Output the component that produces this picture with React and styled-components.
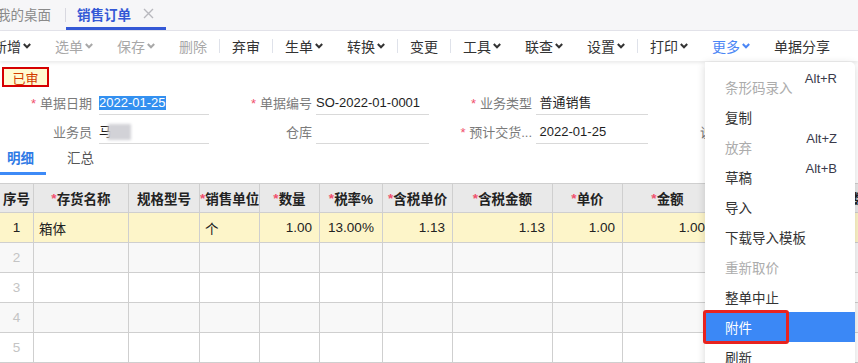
import React from "react";
import styled, { createGlobalStyle } from "styled-components";

const GlobalStyle = createGlobalStyle`
  html, body {
    margin: 0;
    padding: 0;
    background: #fff;
    overflow: hidden;
  }
  body {
    font-family: "Liberation Sans", "Noto Sans CJK SC", sans-serif;
    font-size: 13px;
    color: #222;
  }
`;

const Page = styled.div`
  position: relative;
  width: 858px;
  height: 363px;
  overflow: hidden;
`;

/* ---------- top tabs ---------- */
const TabBar = styled.div`
  display: flex;
  align-items: stretch;
  height: 30px;
  background: #f6f6f8;
  border-bottom: 1px solid #e3e3ea;
`;

const PageTab = styled.div`
  display: flex;
  align-items: center;
  gap: 12px;
  padding: 0 12px 0 ${(p) => (p.$active ? 11 : 12)}px;
  margin-left: ${(p) => p.$offset || 0}px;
  font-size: 13.5px;
  color: ${(p) => (p.$active ? "#3458d6" : "#8a8a8a")};
  font-weight: ${(p) => (p.$active ? 600 : 400)};
  border-bottom: 3px solid ${(p) => (p.$active ? "#3458d6" : "transparent")};
  box-sizing: border-box;
`;

const TabDivider = styled.div`
  width: 1px;
  height: 14px;
  align-self: center;
  background: #d8d8e0;
  margin: 0 0 0 2px;
`;

const CloseIcon = () => (
  <svg width="11" height="11" viewBox="0 0 11 11">
    <path d="M1 1 L10 10 M10 1 L1 10" stroke="#b8b8be" strokeWidth="1.4" />
  </svg>
);

/* ---------- toolbar ---------- */
const Toolbar = styled.div`
  display: flex;
  align-items: center;
  height: 30px;
  background: #fff;
  box-shadow: 0 2px 3px rgba(0, 0, 0, 0.08);
  position: relative;
  z-index: 1;
`;

const ToolRow = styled.div`
  display: flex;
  align-items: center;
  margin-left: -19px;
`;

const ToolItem = styled.div`
  display: flex;
  align-items: center;
  gap: 2px;
  padding: 0 12px;
  font-size: 14px;
  white-space: nowrap;
  color: ${(p) => (p.$disabled ? "#a8a8a8" : p.$active ? "#4a86f5" : "#333")};
`;

const ToolSep = styled.div`
  width: 1px;
  height: 14px;
  background: #dfe2ea;
`;

const Chevron = ({ color }) => (
  <svg width="8" height="6" viewBox="0 0 8 6">
    <path d="M0.8 1 L4 4.3 L7.2 1" fill="none" stroke={color} strokeWidth="2" />
  </svg>
);

/* ---------- form ---------- */
const Body = styled.div`
  padding-top: 6px;
`;

const Badge = styled.div`
  display: flex;
  align-items: center;
  justify-content: center;
  width: 47px;
  height: 20px;
  margin-left: 2px;
  box-sizing: border-box;
  border: 2px solid #d60000;
  background: #fffbd2;
  color: #d23c00;
  font-size: 13px;
`;

const FormRow = styled.div`
  display: flex;
  align-items: flex-end;
  height: 23px;
  margin-top: ${(p) => p.$top}px;
`;

const Field = styled.div`
  display: flex;
  align-items: flex-end;
  margin-left: ${(p) => p.$offset || 0}px;
`;

const Label = styled.div`
  width: ${(p) => p.$w}px;
  margin-right: ${(p) => p.$gap}px;
  text-align: ${(p) => p.$align || "right"};
  color: #7a7a7a;
  line-height: 22px;
  white-space: nowrap;
`;

const Star = styled.span`
  color: #f0506e;
  margin-right: ${(p) => (p.$tight ? 0 : 4)}px;
`;

const Value = styled.div`
  width: ${(p) => p.$w}px;
  height: 23px;
  box-sizing: border-box;
  border-bottom: 1px solid #d9d9d9;
  line-height: 22px;
  color: #1e1e1e;
  display: flex;
  align-items: center;
  white-space: nowrap;
`;

const Selected = styled.span`
  background: #3390f0;
  color: #fff;
  line-height: 14px;
`;

const Blur = styled.span`
  display: inline-block;
  width: 23px;
  height: 16px;
  margin-left: -4px;
  background: #d2d2d7;
  filter: blur(1.5px);
`;

/* ---------- detail tabs ---------- */
const SubTabs = styled.div`
  display: flex;
  height: 29px;
  margin-top: 2px;
`;

const SubTab = styled.div`
  box-sizing: border-box;
  height: 29px;
  width: ${(p) => (p.$active ? 46 : 48)}px;
  padding-left: ${(p) => (p.$active ? 7 : 21)}px;
  line-height: 26px;
  font-size: 13.5px;
  font-weight: ${(p) => (p.$active ? 600 : 400)};
  color: ${(p) => (p.$active ? "#2f7ae5" : "#555")};
  border-bottom: 3px solid ${(p) => (p.$active ? "#3d8af7" : "transparent")};
`;

/* ---------- grid ---------- */
const COLS = [34, 95, 71, 60, 60, 63, 70, 100, 70, 90, 100, 100];

const Grid = styled.div`
  display: grid;
  grid-template-columns: ${COLS.map((c) => c + "px").join(" ")};
  margin-top: 8px;
  margin-left: -1px;
  border-top: 1px solid #cfcfcf;
  border-left: 1px solid #cfcfcf;
  width: max-content;
`;

const Cell = styled.div`
  box-sizing: border-box;
  height: ${(p) => (p.$head ? 29 : 30)}px;
  border-right: 1px solid #cfcfcf;
  border-bottom: 1px solid #cfcfcf;
  padding: 0 ${(p) => (p.$align === "right" ? 7 : 5)}px;
  display: flex;
  align-items: center;
  justify-content: ${(p) =>
    p.$align === "right" ? "flex-end" : p.$align === "left" ? "flex-start" : "center"};
  background: ${(p) => p.$bg};
  color: ${(p) => (p.$muted ? "#c4c4c4" : "#222")};
  font-weight: ${(p) => (p.$head ? 700 : 400)};
  font-size: 13.5px;
  white-space: nowrap;
  overflow: hidden;
`;

/* ---------- dropdown menu ---------- */
const Menu = styled.div`
  position: absolute;
  left: 705px;
  top: 62px;
  width: 150px;
  padding-top: 10px;
  background: #fff;
  border-radius: 0 5px 0 0;
  box-shadow: 0 2px 8px rgba(0, 0, 0, 0.16);
  z-index: 5;
`;

const MenuItem = styled.div`
  position: relative;
  height: 30px;
  padding-left: 20px;
  display: flex;
  align-items: center;
  font-size: 13.5px;
  color: ${(p) => (p.$disabled ? "#acacac" : p.$active ? "#fff" : "#333")};
  background: ${(p) => (p.$active ? "#3b88f6" : "transparent")};
`;

const Shortcut = styled.span`
  position: absolute;
  right: 18px;
  top: -1px;
  font-size: 13px;
  color: #3a3a4a;
`;

const Outline = styled.div`
  position: absolute;
  left: -2px;
  top: -2px;
  width: 86px;
  height: 34px;
  box-sizing: border-box;
  border: 3px solid #e8231f;
  border-radius: 3px;
`;

const tools = [
  { t: "新增", c: 1 },
  { t: "选单", c: 1, d: 1 },
  { t: "保存", c: 1, d: 1 },
  { t: "删除", d: 1 },
  "|",
  { t: "弃审" },
  "|",
  { t: "生单", c: 1 },
  { t: "转换", c: 1 },
  "|",
  { t: "变更" },
  "|",
  { t: "工具", c: 1 },
  { t: "联查", c: 1 },
  { t: "设置", c: 1 },
  "|",
  { t: "打印", c: 1 },
  { t: "更多", c: 1, a: 1 },
  { t: "单据分享" },
];

const headers = [
  ["序号"],
  ["存货名称", 1],
  ["规格型号"],
  ["销售单位", 1],
  ["数量", 1],
  ["税率%", 1],
  ["含税单价", 1],
  ["含税金额", 1],
  ["单价", 1],
  ["金额", 1],
  [""],
  ["数量", 1],
];

const firstRow = [
  ["1", "center"],
  ["箱体", "left"],
  ["", "left"],
  ["个", "left"],
  ["1.00", "right"],
  ["13.00%", "center"],
  ["1.13", "right"],
  ["1.13", "right"],
  ["1.00", "right"],
  ["1.00", "right"],
  ["", "right"],
  ["", "right"],
];

const menu = [
  { t: "条形码录入", d: 1, k: "Alt+R" },
  { t: "复制" },
  { t: "放弃", d: 1, k: "Alt+Z" },
  { t: "草稿", k: "Alt+B" },
  { t: "导入" },
  { t: "下载导入模板" },
  { t: "重新取价", d: 1 },
  { t: "整单中止" },
  { t: "附件", a: 1 },
  { t: "刷新" },
];

const rowBg = ["#fdf5c9", "#f8f8f8", "#fff", "#f8f8f8", "#fff"];

export default function App() {
  return (
    <Page>
      <GlobalStyle />
      <TabBar>
        <PageTab $offset={-15}>我的桌面</PageTab>
        <TabDivider />
        <PageTab $active>
          销售订单
          <CloseIcon />
        </PageTab>
      </TabBar>

      <Toolbar>
        <ToolRow>
          {tools.map((it, i) =>
            it === "|" ? (
              <ToolSep key={i} />
            ) : (
              <ToolItem key={i} $disabled={it.d} $active={it.a}>
                {it.t}
                {it.c && <Chevron color={it.d ? "#a8a8a8" : it.a ? "#4a86f5" : "#333"} />}
              </ToolItem>
            )
          )}
        </ToolRow>
      </Toolbar>

      <Body>
        <Badge>已审</Badge>

        <FormRow $top={5}>
          <Field>
            <Label $w={92} $gap={7}>
              <Star>*</Star>单据日期
            </Label>
            <Value $w={110}>
              <Selected>2022-01-25</Selected>
            </Value>
          </Field>
          <Field>
            <Label $w={103} $gap={4}>
              <Star>*</Star>单据编号
            </Label>
            <Value $w={113}>SO-2022-01-0001</Value>
          </Field>
          <Field>
            <Label $w={103} $gap={4}>
              <Star>*</Star>业务类型
            </Label>
            <Value $w={112}>&nbsp;普通销售</Value>
          </Field>
        </FormRow>

        <FormRow $top={6}>
          <Field>
            <Label $w={92} $gap={7}>业务员</Label>
            <Value $w={110}>
              马<Blur />
            </Value>
          </Field>
          <Field>
            <Label $w={103} $gap={4}>仓库</Label>
            <Value $w={113} />
          </Field>
          <Field>
            <Label $w={103} $gap={4}>
              <Star $tight>*</Star> 预计交货...
            </Label>
            <Value $w={112}>&nbsp;2022-01-25</Value>
          </Field>
          <Field $offset={52}>
            <Label $w={40} $gap={0} $align="left">
              说明
            </Label>
          </Field>
        </FormRow>

        <SubTabs>
          <SubTab $active>明细</SubTab>
          <SubTab>汇总</SubTab>
        </SubTabs>

        <Grid>
          {headers.map(([h, req], i) => (
            <Cell key={"h" + i} $head $bg="#e9e9e9">
              {req && <Star $tight>*</Star>}
              {h}
            </Cell>
          ))}
          {firstRow.map(([v, a], i) => (
            <Cell key={"r1" + i} $align={a} $bg={rowBg[0]}>
              {v}
            </Cell>
          ))}
          {[2, 3, 4, 5].map((n) =>
            COLS.map((_, i) => (
              <Cell key={n + "-" + i} $bg={rowBg[n - 1]} $muted>
                {i === 0 ? n : ""}
              </Cell>
            ))
          )}
        </Grid>
      </Body>

      <Menu>
        {menu.map((m, i) => (
          <MenuItem key={i} $disabled={m.d} $active={m.a}>
            {m.t}
            {m.k && <Shortcut>{m.k}</Shortcut>}
            {m.a && <Outline />}
          </MenuItem>
        ))}
      </Menu>
    </Page>
  );
}
